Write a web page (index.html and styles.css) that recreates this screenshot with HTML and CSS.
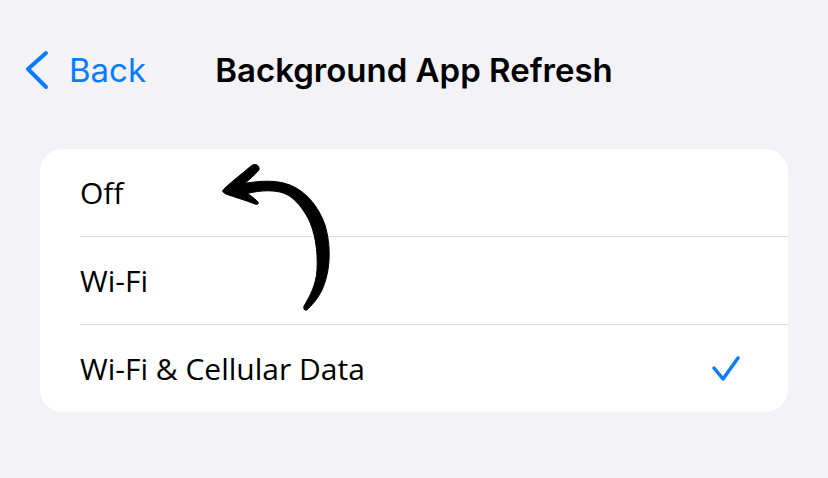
FILE: index.html
```html
<!DOCTYPE html>
<html lang="en">
<head>
  <meta charset="UTF-8">
  <meta name="viewport" content="width=device-width, initial-scale=1">
  <title>Background App Refresh</title>
  <link rel="stylesheet" href="styles.css">
</head>
<body>
  <header class="nav">
    <a class="back" href="#">
      <svg class="chevron" width="26" height="40" viewBox="0 0 26 40">
        <polyline points="21,3 3,19 21,37" />
      </svg>
      <span>Back</span>
    </a>
    <h1 class="title">Background App Refresh</h1>
    <span></span>
  </header>

  <div class="card">
    <div class="rows">
      <div class="row">Off</div>
      <div class="row">Wi-Fi</div>
      <div class="row">
        <span>Wi-Fi &amp; Cellular Data</span>
        <svg class="check" width="30" height="28" viewBox="0 0 30 28">
          <polyline points="3,13 12,24 27,3" />
        </svg>
      </div>
    </div>

    <!-- hand drawn arrow pointing at "Off" -->
    <svg class="arrow" width="160" height="160" viewBox="200 160 160 160">
      <path d="M232 186 C250 182, 272 178, 290 185 C305 191, 318 205, 325 225 C331 245, 331 270, 322 290 C317 300, 311 306, 307 310 Q303 311, 304 306 C310 296, 316 285, 317 270 C318 250, 315 232, 308 218 C300 204, 292 195, 280 192 C265 189, 250 192, 235 197 Z" />
      <path d="M224 189 C232 181, 242 174, 251 166 C255 163, 260 165, 259 170 C254 176, 246 182, 240 188 L245 192 C250 195, 254 198, 258 202 C259 204, 257 205, 255 204 C245 200, 234 197, 226 194 C222 192, 222 191, 224 189 Z" />
    </svg>
  </div>
</body>
</html>
```

FILE: styles.css
```css
body {
  margin: 0;
  background-color: #f2f2f7;
  font-family: "Open Sans", "Noto Sans", sans-serif;
  color: #000;
}
.nav {
  display: grid;
  grid-template-columns: 1fr auto 1fr;
  align-items: center;
  height: 140px;
}
.back {
  display: flex;
  align-items: center;
  gap: 18px;
  padding-left: 25px;
  color: #0a7aff;
  text-decoration: none;
  font-family: "Inter", sans-serif;
  font-size: 33px;
}
.chevron polyline {
  fill: none;
  stroke: #0a7aff;
  stroke-width: 4;
  stroke-linecap: round;
  stroke-linejoin: round;
}
.title {
  margin: 0;
  font-family: "Inter", sans-serif;
  font-size: 33px;
  font-weight: 600;
}
.card {
  position: relative;
  margin: 9px 40px 0;
  background: #fff;
  border-radius: 22px;
  overflow: hidden;
}
.row {
  display: flex;
  align-items: center;
  justify-content: space-between;
  height: 88px;
  margin-left: 40px;
  padding-right: 47px;
  font-size: 30px;
  border-bottom: 1px solid #dcdce0;
  box-sizing: border-box;
}
.row:last-child {
  height: 87px;
  border-bottom: none;
}
.check polyline {
  fill: none;
  stroke: #0a7aff;
  stroke-width: 3.5;
  stroke-linecap: round;
  stroke-linejoin: round;
}
.arrow {
  position: absolute;
  left: 160px;
  top: 11px;
}
.arrow path {
  fill: #000;
  stroke: #000;
  stroke-width: 1;
  stroke-linejoin: round;
}
```
